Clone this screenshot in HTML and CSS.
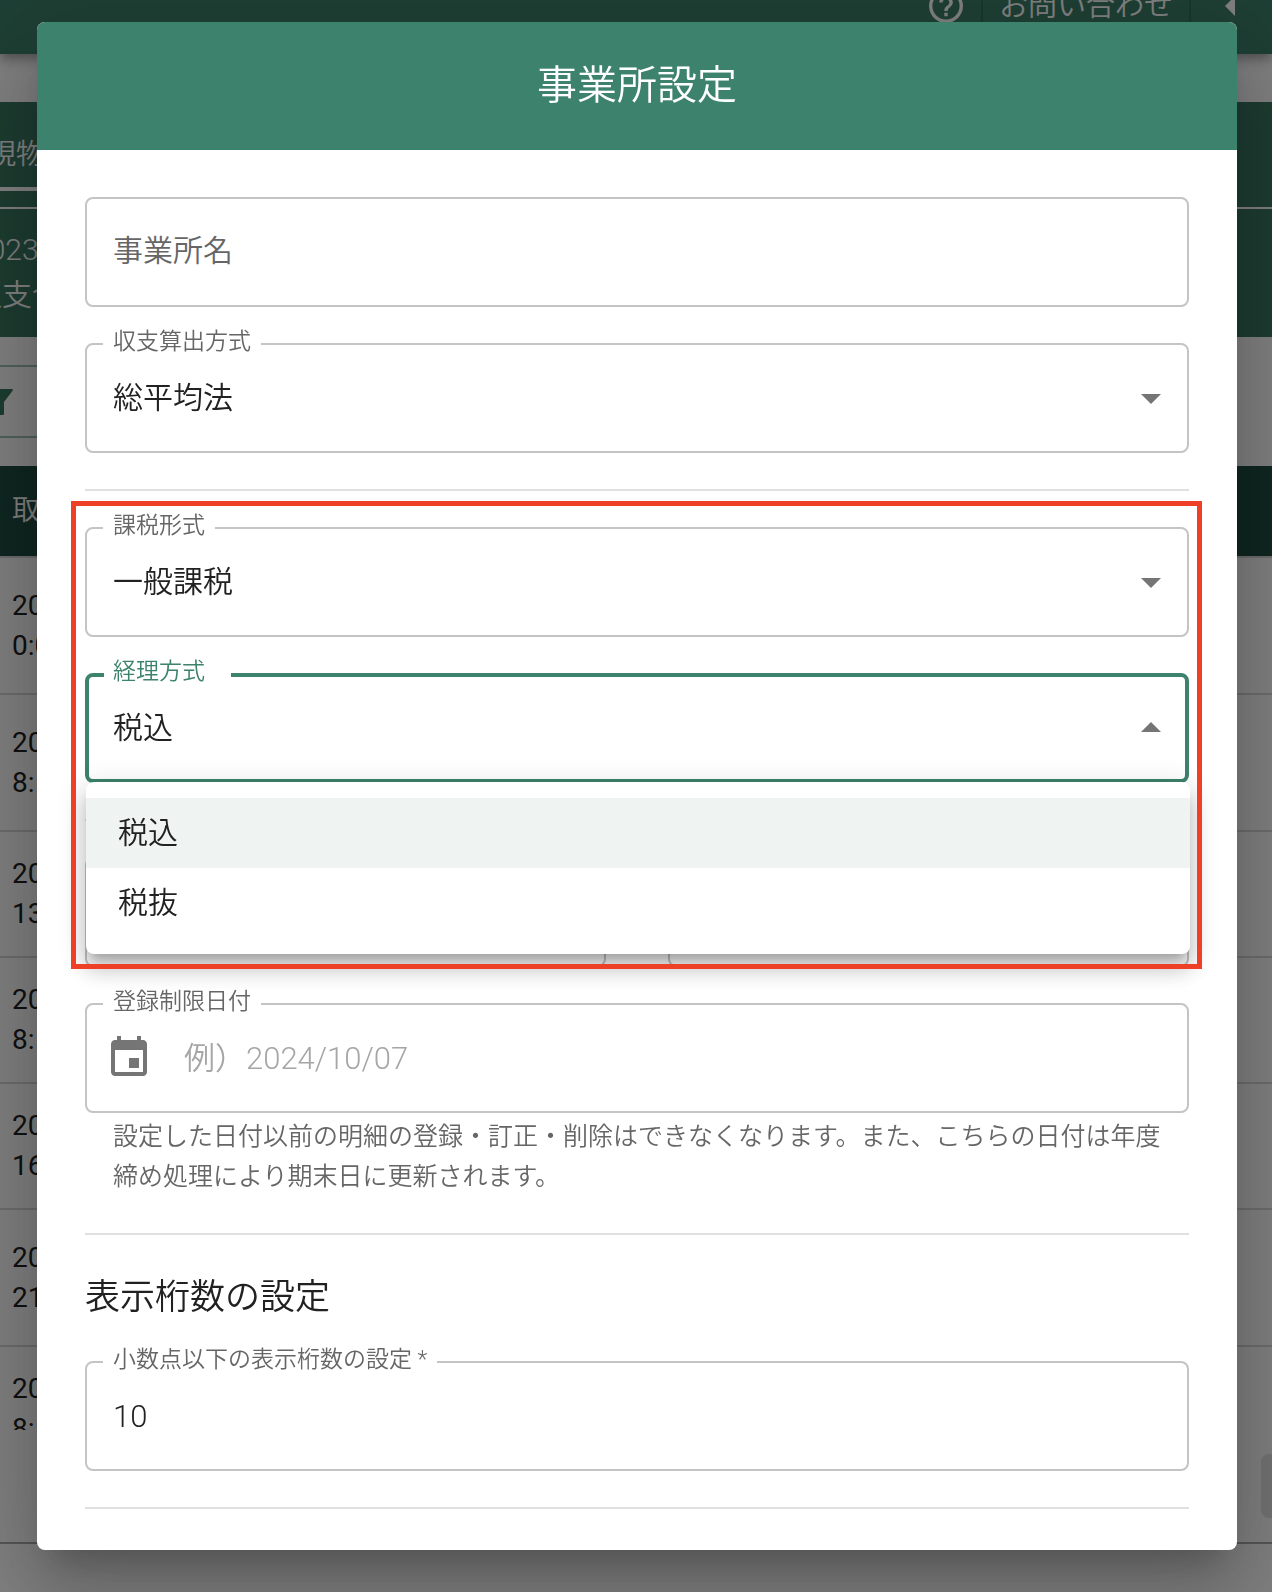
FILE: index.html
```html
<!DOCTYPE html>
<html lang="ja">
<head>
  <meta charset="UTF-8" />
  <meta name="viewport" content="width=device-width, initial-scale=1" />
  <title>事業所設定</title>
  <link rel="stylesheet" href="styles.css">
</head>
<body>
  <div class="page" aria-hidden="true">
    <header class="appbar">
      <div class="appbar-item">
        <svg class="help-icon" viewBox="2 2 20 20"><path d="M11 18h2v-2h-2v2zm1-16C6.48 2 2 6.48 2 12s4.48 10 10 10 10-4.48 10-10S17.52 2 12 2zm0 18c-4.41 0-8-3.59-8-8s3.59-8 8-8 8 3.59 8 8-3.59 8-8 8zm0-14c-2.21 0-4 1.79-4 4h2c0-1.1.9-2 2-2s2 .9 2 2c0 2-3 1.75-3 5h2c0-2.25 3-2.5 3-5 0-2.21-1.79-4-4-4z"/></svg>
      </div>
      <div class="appbar-item appbar-contact">お問い合わせ</div>
      <div class="appbar-item appbar-toggle">
        <svg class="back-icon" viewBox="0 0 10 20"><path d="M10 0v20L0 10z"/></svg>
      </div>
    </header>

    <section class="summary">
      <div class="tabs"><span class="tab">現物</span></div>
      <div class="period">2023<br>収支合</div>
    </section>

    <div class="toolbar">
      <div class="filter">
        <svg class="filter-icon" viewBox="0 0 26 26"><path d="M1 0h24c1 0 1 1 .6 1.700L17 13v12c0 1-1 1-1 1h-5c-1 0-2-1-2-2V13L.4 1.700C0 1 0 0 1 0z"/></svg>
      </div>
    </div>

    <div class="table-wrap">
      <table class="trades">
        <thead>
          <tr><th>取</th></tr>
        </thead>
        <tbody>
          <tr class="tall"><td>20<br>0:0</td></tr>
          <tr class="tall"><td>20<br>8:</td></tr>
          <tr><td>20<br>13</td></tr>
          <tr><td>20<br>8:</td></tr>
          <tr><td>20<br>16</td></tr>
          <tr class="tall"><td>20<br>21</td></tr>
          <tr><td>20<br>8:</td></tr>
        </tbody>
      </table>
    </div>

    <div class="pager"><span class="pager-btn"></span></div>
  </div>

  <div class="backdrop">
    <form class="dialog" role="dialog" aria-labelledby="dialog-title">
      <h1 class="dialog-title" id="dialog-title">事業所設定</h1>

      <div class="dialog-body">
        <div class="field empty">
          <input type="text" id="office" class="control">
          <label for="office">事業所名</label>
        </div>

        <div class="field">
          <select id="method" class="control">
            <option>総平均法</option>
          </select>
          <label for="method">収支算出方式</label>
          <svg class="arrow" viewBox="0 0 20 10"><path d="M0 0h20L10 10z"/></svg>
        </div>

        <hr>

        <div class="highlight">
          <div class="field">
            <select id="tax" class="control">
              <option>一般課税</option>
            </select>
            <label for="tax">課税形式</label>
            <svg class="arrow" viewBox="0 0 20 10"><path d="M0 0h20L10 10z"/></svg>
          </div>

          <div class="field open">
            <select id="accounting" class="control">
              <option>税込</option>
              <option>税抜</option>
            </select>
            <label for="accounting">経理方式</label>
            <svg class="arrow" viewBox="0 0 20 10"><path d="M0 10h20L10 0z"/></svg>
            <ul class="menu" role="listbox">
              <li class="menu-item selected" role="option" aria-selected="true">税込</li>
              <li class="menu-item" role="option">税抜</li>
            </ul>
          </div>

          <hr>

          <div class="row">
            <div class="field"><input type="text" class="control" aria-label="開始"></div>
            <div class="field"><input type="text" class="control" aria-label="終了"></div>
          </div>
        </div>

        <div class="field-group">
          <div class="field with-icon">
            <svg class="event-icon" viewBox="0 0 24 24"><path d="M17 12h-5v5h5v-5zM16 1v2H8V1H6v2H5c-1.110 0-1.990.9-1.990 2L3 19c0 1.100.89 2 2 2h14c1.100 0 2-.9 2-2V5c0-1.100-.9-2-2-2h-1V1h-2zm3 18H5V8h14v11z"/></svg>
            <input type="text" id="limit" class="control" placeholder="例）2024/10/07">
            <label for="limit">登録制限日付</label>
          </div>
          <p class="helper">設定した日付以前の明細の登録・訂正・削除はできなくなります。また、こちらの日付は年度締め処理により期末日に更新されます。</p>
        </div>

        <hr>

        <h2>表示桁数の設定</h2>

        <div class="field">
          <input type="text" id="digits" class="control" value="10">
          <label for="digits">小数点以下の表示桁数の設定 *</label>
        </div>

        <hr>
      </div>
    </form>
  </div>
</body>
</html>
```
FILE: styles.css
```css
* {
  box-sizing: border-box;
}

body {
  margin: 0;
  font-family: Roboto, "Noto Sans CJK JP", sans-serif;
  font-size: 30px;
  font-weight: 350;
  line-height: 40px;
  color: #212121;
}

/* 背景のページ */
.page {
  height: 100vh;
  overflow: hidden;
  display: flex;
  flex-direction: column;
  background: #fff;
  font-size: 28px;
}

.appbar {
  position: relative;
  flex: none;
  display: flex;
  justify-content: flex-end;
  height: 96px;
  margin-top: -42px;
  background: #3c7e69;
  color: #fff;
  box-shadow: 0 4px 8px -2px rgba(0,0,0,0.2), 0 8px 10px rgba(0,0,0,0.14), 0 2px 20px rgba(0,0,0,0.12);
}

.appbar-item {
  display: flex;
  align-items: center;
  padding: 0 18px;
}

.appbar-contact,
.appbar-toggle {
  border-left: 2px solid #326c59;
}

.appbar-contact {
  padding: 0 16px;
  font-size: 29px;
}

.appbar-toggle {
  padding: 0 37px 0 34px;
}

.help-icon {
  width: 34px;
  height: 34px;
  fill: #fff;
}

.back-icon {
  width: 10px;
  height: 20px;
  fill: #fff;
}

.summary {
  flex: none;
  height: 235px;
  margin-top: 48px;
  background: #3a7862;
  color: #fff;
}

.tabs {
  height: 107px;
  border-bottom: 2px solid #fff;
}

.tab {
  display: inline-block;
  margin-left: -12px;
  padding: 33px 30px 12px 0;
  border-bottom: 4px solid #fff;
}

.period {
  margin-left: -28px;
  padding-top: 18px;
  font-size: 30px;
  line-height: 45px;
}

.toolbar {
  flex: none;
  height: 129px;
  padding-top: 28px;
}

.filter {
  display: flex;
  align-items: center;
  width: 50%;
  height: 73px;
  border: 2px solid #9fc1b5;
  border-width: 2px 0;
}

.filter-icon {
  width: 26px;
  height: 26px;
  margin-left: -13px;
  fill: #3a7862;
}

.table-wrap {
  flex: none;
  height: 964px;
  overflow: hidden;
}

.trades {
  width: 100%;
  border-collapse: separate;
  border-spacing: 0;
}

.trades th,
.trades td {
  height: 126px;
  padding: 0 12px;
  border-bottom: 2px solid #d8d8d8;
  text-align: left;
  font-weight: 400;
}

.trades th {
  height: 92px;
  background: #1f4d41;
  color: #fff;
  font-weight: 350;
}

.trades .tall td {
  height: 137px;
}

.pager {
  flex: none;
  display: flex;
  justify-content: flex-end;
  align-items: flex-start;
  height: 114px;
  padding-top: 24px;
  border-bottom: 2px solid #aaa;
}

.pager-btn {
  width: 11px;
  height: 64px;
  border-radius: 8px 0 0 8px;
  background: #e4e4e4;
}

/* ダイアログ */
.backdrop {
  position: fixed;
  top: 0;
  left: 0;
  right: 0;
  bottom: 0;
  overflow: auto;
  padding: 22px 35px 42px 37px;
  background: rgba(0, 0, 0, 0.5);
}

.dialog {
  border-radius: 8px;
  background: #fff;
  box-shadow: 0 22px 30px -14px rgba(0,0,0,0.2), 0 48px 76px 6px rgba(0,0,0,0.14), 0 18px 92px 16px rgba(0,0,0,0.12);
}

.dialog-title {
  margin: 0;
  padding: 32px 48px;
  border-radius: 8px 8px 0 0;
  background: #3d826c;
  color: #fff;
  font-size: 40px;
  font-weight: 350;
  line-height: 64px;
  text-align: center;
}

.dialog-body,
.highlight {
  display: flex;
  flex-direction: column;
  gap: 36px;
}

.dialog-body {
  padding: 47px 48px 41px;
}

.dialog hr {
  width: 100%;
  height: 2px;
  margin: 0;
  border: 0;
  background: #e0e0e0;
}

.dialog h2 {
  margin: 0;
  font-size: 35px;
  font-weight: 350;
  line-height: 54px;
}

.field {
  position: relative;
  flex: 1;
  display: flex;
  align-items: center;
  height: 110px;
  border: 2px solid #c4c4c4;
  border-radius: 8px;
}

.control {
  appearance: none;
  flex: 1;
  width: 100%;
  min-width: 0;
  height: 106px;
  margin: 0;
  padding: 0 26px;
  border: 0;
  outline: 0;
  background: none;
  color: #212121;
  font: inherit;
}

input.control {
  font-size: 31px;
}

.control::placeholder {
  color: #a6a6a6;
  opacity: 1;
}

/* ラベルは枠線の上に重ねる */
.field label {
  position: absolute;
  top: -15px;
  left: 16px;
  padding: 0 10px;
  background: #fff;
  color: #666;
  font-size: 23px;
  line-height: 24px;
}

.field.empty label {
  top: 32px;
  font-size: 30px;
  line-height: 40px;
}

.arrow {
  position: absolute;
  top: 49px;
  right: 26px;
  width: 20px;
  height: 10px;
  fill: #757575;
  pointer-events: none;
}

.field.open {
  border: 4px solid #3d826c;
}

.field.open .control {
  padding: 0 24px;
  height: 102px;
}

.field.open label {
  top: -17px;
  left: 15px;
  padding: 0 26px 0 9px;
  color: #3d826c;
}

.field.open .arrow {
  top: 45px;
  right: 24px;
}

.with-icon .control {
  padding-left: 31px;
}

.event-icon {
  width: 48px;
  height: 48px;
  margin-left: 18px;
  fill: #757575;
}

.menu {
  position: absolute;
  z-index: 2;
  top: 105px;
  left: -3px;
  right: -5px;
  margin: 0;
  padding: 16px 0;
  border-radius: 8px;
  background: #fff;
  list-style: none;
  box-shadow: 0 10px 10px -6px rgba(0,0,0,0.2), 0 16px 20px 2px rgba(0,0,0,0.14), 0 6px 28px 4px rgba(0,0,0,0.12);
}

.menu-item {
  padding: 15px 32px;
}

.menu-item.selected {
  background: #eff3f2;
}

.row {
  display: flex;
  gap: 62px;
}

/* 赤枠 */
.highlight {
  position: relative;
}

.highlight::after {
  content: "";
  position: absolute;
  z-index: 3;
  top: -26px;
  left: -14px;
  right: -13px;
  bottom: -2px;
  border: 5px solid #ee4027;
  pointer-events: none;
}

.helper {
  margin: 4px 20px 0 28px;
  color: #666;
  font-size: 25px;
}
```
